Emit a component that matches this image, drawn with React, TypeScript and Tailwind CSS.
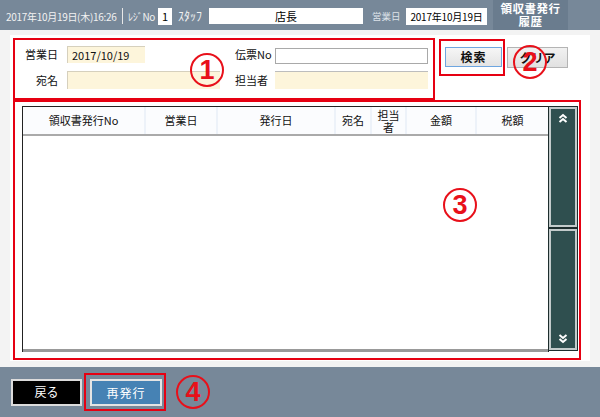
import React from "react";

function Circled({ n, cls }: { n: string; cls: string }) {
  return (
    <div
      className={`absolute w-[34px] h-[34px] rounded-full border-2 border-[#e8101a] text-[#e8101a] flex items-center justify-center font-['Liberation_Sans',sans-serif] font-bold text-[27px] leading-none ${cls}`}
    >
      {n}
    </div>
  );
}

function DoubleChevron({ up }: { up: boolean }) {
  return (
    <svg width="10" height="10" viewBox="0 0 10 10" className={up ? "" : "rotate-180"}>
      <polyline points="1.5,5 5,2 8.5,5" fill="none" stroke="#fff" strokeWidth="2" />
      <polyline points="1.5,9 5,6 8.5,9" fill="none" stroke="#fff" strokeWidth="2" />
    </svg>
  );
}

const cols: { label: React.ReactNode; w: string }[] = [
  { label: "領収書発行No", w: "w-[123px]" },
  { label: "営業日", w: "w-[72px]" },
  { label: "発行日", w: "w-[118px]" },
  { label: "宛名", w: "w-[36px]" },
  { label: (<span className="leading-[12px] text-center block">担当<br />者</span>), w: "w-[35px]" },
  { label: "金額", w: "w-[70px]" },
  { label: "税額", w: "w-[71px]" },
];

export default function App() {
  return (
    <div className="relative w-[600px] h-[417px] flex flex-col overflow-hidden font-['Noto_Sans_CJK_JP','Noto_Sans',sans-serif] text-[#111]">
      {/* Header */}
      <div className="h-[30px] bg-[#778899] flex items-center text-[#f2f2f2] text-[10px] whitespace-nowrap">
        <div className="w-[6px]" />
        <span className="w-[113px] tracking-[-0.3px] pt-[2px]">2017年10月19日(木)16:26</span>
        <div className="ml-[3px] w-px h-[16px] bg-[#e8e8e8] mt-[2px]" />
        <span className="ml-[5px] w-[28px] pt-[2px] text-[10px] tracking-[-0.3px]">ﾚｼﾞNo</span>
        <div className="ml-[2px] w-[14px] h-[17px] bg-white text-black text-[11px] flex items-center justify-center mt-[2px]">1</div>
        <span className="ml-[6px] w-[28px] pt-[2px] text-[12px]">ｽﾀｯﾌ</span>
        <div className="ml-[3px] w-[154px] h-[16px] bg-white text-black text-[11px] flex items-center justify-center mt-[2px]">店長</div>
        <span className="ml-[9px] w-[30px] pt-[2px] text-[9.5px] text-[#dde3e9]">営業日</span>
        <div className="ml-[4px] w-[81px] h-[17px] bg-white text-black text-[10px] flex items-center justify-center mt-[2px] tracking-[-0.2px]">2017年10月19日</div>
        <div className="ml-[6px] w-[75px] h-full bg-[#6a7c8e] text-white text-[11.5px] font-bold leading-[13px] flex flex-col items-center justify-center tracking-[0.5px]">
          <span className="block">領収書発行</span>
          <span className="block">履歴</span>
        </div>
      </div>

      {/* Main */}
      <div className="flex-1 bg-[#f3f3f3] pl-[10px] pr-[10px] pt-[5px] pb-[6px]">
        <div className="h-full bg-white pl-[3px] pt-[3px] flex flex-col">
          <div className="flex items-start">
            {/* Box 1 */}
            <div className="w-[422px] h-[62px] border-2 border-[#e60012] pt-[6px] text-[11px]">
              <div className="flex items-center h-[17px]">
                <div className="w-[220px] flex items-center">
                  <span className="w-[43px] text-right">営業日</span>
                  <div className="ml-[9px] w-[78px] h-[17px] bg-[#fdf5db] border-t border-l border-[#d6d0bd] pl-[4px] flex items-center">2017/10/19</div>
                </div>
                <span className="w-[40px]">伝票No</span>
                <div className="w-[153px] h-[16px] mt-[3px] bg-white border border-[#a9a9a9]" />
              </div>
              <div className="flex items-center mt-[8px] h-[18px]">
                <div className="w-[220px] flex items-center">
                  <span className="w-[43px] text-right">宛名</span>
                  <div className="ml-[9px] w-[153px] h-[18px] bg-[#fdf5db] border-t border-l border-[#d6d0bd]" />
                </div>
                <span className="w-[40px]">担当者</span>
                <div className="w-[153px] h-[18px] bg-[#fdf5db] border-t border-[#bdbdbd]" />
              </div>
            </div>
            {/* Box 2 */}
            <div className="ml-[4px] mt-[1px] w-[66px] h-[37px] border-2 border-[#e60012] pl-[4px] pt-[6px]">
              <div className="w-[57px] h-[20px] border border-[#6ea6e0] bg-gradient-to-b from-[#f6f6f6] to-[#e4e4e4] flex items-center justify-center text-[12px] font-bold tracking-[1px]">検索</div>
            </div>
            <div className="ml-[2px] mt-[9px] w-[61px] h-[21px] border border-[#b4b4b4] bg-gradient-to-b from-[#f1f1f1] to-[#e1e1e1] flex items-center justify-center text-[12px] font-bold">クリア</div>
          </div>

          {/* Box 3 */}
          <div className="w-[568px] h-[260px] border-2 border-[#e60012] pl-[7px] pt-[4px] flex items-start">
            <div className="w-[527px] h-[246px] border-t border-l border-r border-[#222] flex flex-col">
              <div className="h-[29px] flex bg-[#fbfcfe] border-b-2 border-[#aaaaaa] text-[11px]">
                {cols.map((c, i) => (
                  <div key={i} className={`${c.w} h-full flex items-center justify-center ${i < cols.length - 1 ? "border-r-2 border-[#edf2f9]" : ""}`}>
                    {c.label}
                  </div>
                ))}
              </div>
              <div className="flex-1 bg-white border-b-[3px] border-[#999999]" />
            </div>
            <div className="mt-[1px] w-[28px] h-[243px] flex flex-col gap-[2px]">
              <div className="h-[120px] bg-[#2f4f4f] border-2 border-[#c3cbcb] shadow-[0_0_0_1px_#1d2d2d] flex justify-center pt-[4px]">
                <DoubleChevron up={true} />
              </div>
              <div className="flex-1 bg-[#2f4f4f] border-2 border-[#c3cbcb] shadow-[0_0_0_1px_#1d2d2d] flex justify-center items-end pb-[4px]">
                <DoubleChevron up={false} />
              </div>
            </div>
          </div>
        </div>
      </div>

      {/* Footer */}
      <div className="h-[50px] bg-[#778899] flex items-center pl-[11px]">
        <div className="w-[71px] h-[27px] bg-black border-2 border-[#dcdcdc] text-white text-[12px] flex items-center justify-center">戻る</div>
        <div className="ml-[2px] w-[82px] h-[38px] border-2 border-[#e60012] pl-[4px] pt-[4px]">
          <div className="w-[72px] h-[27px] bg-[#4682b4] border-2 border-[#e4e4e4] text-white text-[12px] flex items-center justify-center tracking-[1px]">再発行</div>
        </div>
      </div>

      <Circled n="1" cls="left-[190px] top-[53px]" />
      <Circled n="2" cls="left-[513px] top-[45px]" />
      <Circled n="3" cls="left-[443px] top-[188px]" />
      <Circled n="4" cls="left-[176px] top-[375px]" />
    </div>
  );
}
